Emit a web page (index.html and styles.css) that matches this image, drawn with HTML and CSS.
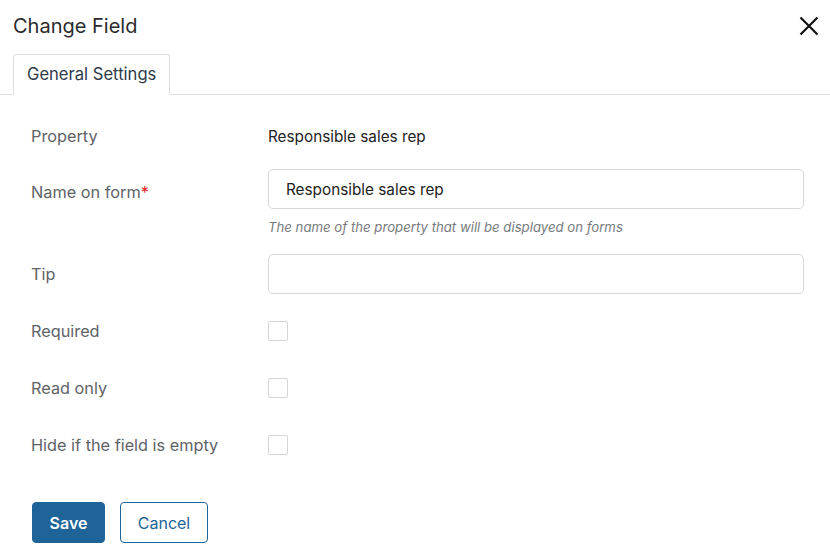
FILE: index.html
```html
<!DOCTYPE html>
<html lang="en">
<head>
<meta charset="utf-8">
<title>Change Field</title>
<link rel="stylesheet" href="styles.css">
</head>
<body>
<div class="dialog">
  <header class="header">
    <h1 class="title">Change Field</h1>
    <button class="close" aria-label="Close">
      <svg width="20" height="20" viewBox="0 0 20 20"><path d="M1.5 1.5 L18.5 18.5 M18.5 1.5 L1.5 18.5" stroke="#111" stroke-width="2.2" fill="none"/></svg>
    </button>
  </header>
  <nav class="tabs">
    <div class="tab">General Settings</div>
  </nav>
  <form class="form">
    <div class="row row-text">
      <div class="label">Property</div>
      <div class="value">Responsible sales rep</div>
    </div>
    <div class="row row-top">
      <div class="label label-top">Name on form<span class="req">*</span></div>
      <div class="field">
        <div class="input">Responsible sales rep</div>
        <div class="hint">The name of the property that will be displayed on forms</div>
      </div>
    </div>
    <div class="row">
      <div class="label">Tip</div>
      <div class="field"><div class="input"></div></div>
    </div>
    <div class="checks">
      <div class="row">
        <div class="label">Required</div>
        <div class="field"><span class="checkbox"></span></div>
      </div>
      <div class="row">
        <div class="label">Read only</div>
        <div class="field"><span class="checkbox"></span></div>
      </div>
      <div class="row">
        <div class="label">Hide if the field is empty</div>
        <div class="field"><span class="checkbox"></span></div>
      </div>
    </div>
    <div class="footer">
      <button type="button" class="btn btn-primary">Save</button>
      <button type="button" class="btn btn-secondary">Cancel</button>
    </div>
  </form>
</div>
</body>
</html>
```
FILE: styles.css
```css
* { box-sizing: border-box; }
html, body { margin: 0; padding: 0; background: #fff; }
body {
  font-family: Inter, "Noto Sans", "Liberation Sans", sans-serif;
  color: #222;
  width: 830px;
  height: 549px;
  overflow: hidden;
}
.header {
  display: flex;
  align-items: center;
  justify-content: space-between;
  height: 50px;
  padding: 1px 10px 0 13px;
}
.title {
  margin: 0;
  font-size: 20px;
  font-weight: 400;
  color: #2b2b2b;
}
.close {
  border: 0;
  background: none;
  padding: 0;
  width: 20px;
  height: 20px;
  margin-right: 1px;
  cursor: pointer;
}
.close svg { display: block; }
.tabs {
  margin-top: 4px;
  padding-left: 13px;
  border-bottom: 1px solid #e2e2e8;
  display: flex;
}
.tab {
  height: 41px;
  margin-bottom: -1px;
  width: 157px;
  border: 1px solid #dcdde3;
  border-bottom-color: #fff;
  border-radius: 3px 3px 0 0;
  background: #fff;
  display: flex;
  align-items: center;
  padding-left: 13px;
  padding-bottom: 1px;
  font-size: 16.6px;
  color: #2f3a4b;
}
.form {
  padding: 21px 26px 0 31px;
  display: flex;
  flex-direction: column;
  gap: 13px;
}
.row {
  display: grid;
  grid-template-columns: 237px 1fr;
  align-items: center;
  min-height: 40px;
}
.row-top { align-items: start; }
.label {
  font-size: 16.3px;
  color: #606266;
  line-height: 24px;
}
.label-top { padding-top: 11px; }
.req { color: #e0261f; }
.value { font-size: 15.3px; color: #222; }
.input {
  height: 40px;
  border: 1px solid #d8d8dc;
  border-radius: 5px;
  padding: 0 17px;
  display: flex;
  align-items: center;
  font-size: 15.3px;
  color: #222;
}
.hint {
  margin-top: 9px;
  padding-bottom: 5px;
  font-size: 13.2px;
  line-height: 18px;
  font-style: italic;
  color: #777a7e;
}
.checks {
  display: flex;
  flex-direction: column;
  gap: 17px;
  margin-top: 4px;
}
.checkbox {
  display: block;
  width: 20px;
  height: 20px;
  border: 1px solid #d6d6da;
  border-radius: 2px;
  background: #fff;
}
.footer {
  display: flex;
  gap: 15px;
  padding-top: 24px;
  padding-left: 1px;
}
.btn {
  height: 41px;
  border-radius: 4px;
  font-family: inherit;
  font-size: 16px;
  padding: 0;
  cursor: pointer;
}
.btn-primary {
  width: 73px;
  background: #1f6498;
  border: 1px solid #1f6498;
  color: #fff;
  font-weight: 600;
}
.btn-secondary {
  width: 88px;
  background: #fff;
  border: 1px solid #1f6498;
  color: #1f6498;
}
```
